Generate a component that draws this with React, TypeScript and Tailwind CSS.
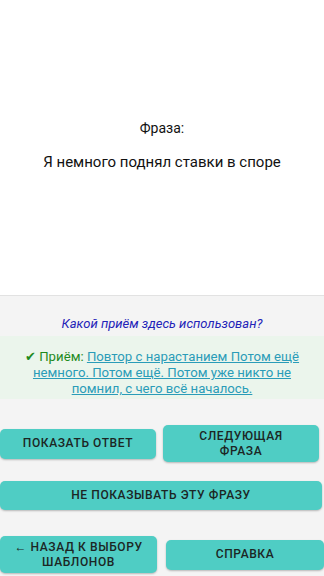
const btn =
  "flex items-center justify-center rounded-[5px] bg-[#4fcdc4] px-2 text-center text-[12px] leading-[15px] font-medium tracking-[0.05em] text-[#1c2624] shadow-[0_1px_2px_rgba(0,0,0,0.25)]";

export default function App() {
  return (
    <div className="flex h-[576px] w-[324px] flex-col overflow-hidden bg-white font-['Roboto',sans-serif]">
      <div className="flex h-[295px] flex-col items-center pt-[118px] text-[#111]">
        <p className="text-[14px] leading-5">Фраза:</p>
        <p className="mt-[14px] text-[15px] leading-5">Я немного поднял ставки в споре</p>
      </div>

      <div className="flex flex-1 flex-col border-t border-[#e2e2e2] bg-[#f4f4f4]">
        <p className="pt-[18px] text-center text-[13px] leading-5 text-[#2323b8] italic">
          Какой приём здесь использован?
        </p>
        <div className="mt-[2px] bg-[#ebf5ec] px-6 pt-[13px] pb-[2px] text-center text-[13.2px] leading-4">
          <span className="text-[#1e8a1e]">✔ Приём: </span>
          <span className="text-[#2a9cb8] underline">
            Повтор с нарастанием Потом ещё немного. Потом ещё. Потом уже никто не помнил, с чего всё началось.
          </span>
        </div>

        <div className="mt-[26px] flex items-center justify-between pr-[5px]">
          <button type="button" className={`${btn} h-[30px] w-[156px]`}>
            ПОКАЗАТЬ ОТВЕТ
          </button>
          <button type="button" className={`${btn} h-[37px] w-[156px] !px-8`}>
            СЛЕДУЮЩАЯ ФРАЗА
          </button>
        </div>

        <div className="mt-[19px] pr-[2px]">
          <button type="button" className={`${btn} h-[29px] w-full`}>
            НЕ ПОКАЗЫВАТЬ ЭТУ ФРАЗУ
          </button>
        </div>

        <div className="mt-[26px] flex items-center justify-between">
          <button type="button" className={`${btn} h-[37px] w-[157px]`}>
            ← НАЗАД К ВЫБОРУ ШАБЛОНОВ
          </button>
          <button type="button" className={`${btn} h-[30px] w-[158px]`}>
            СПРАВКА
          </button>
        </div>
      </div>
    </div>
  );
}
